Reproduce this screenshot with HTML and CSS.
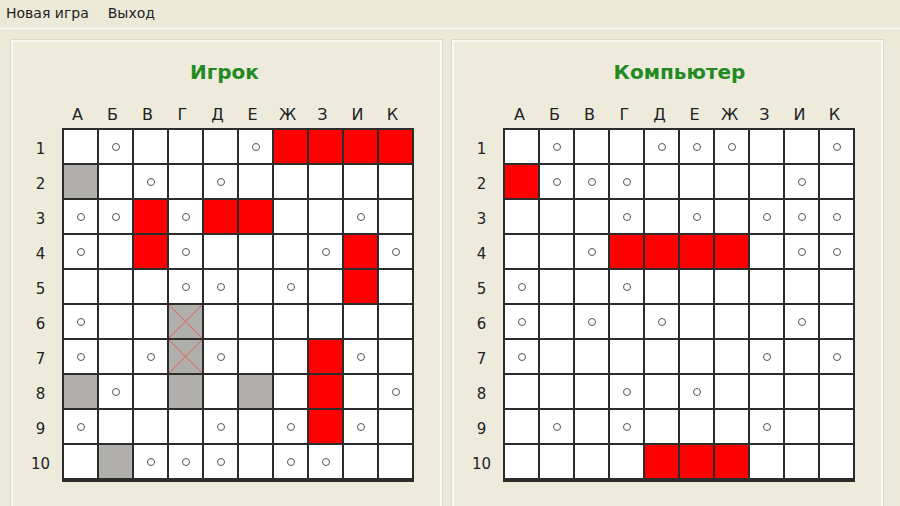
FILE: index.html
```html
<!DOCTYPE html>
<html lang="ru">
<head>
<meta charset="utf-8">
<title>Морской бой</title>
<link rel="stylesheet" href="styles.css">
</head>
<body>
<div class="menubar">
  <span class="menu-item">Новая игра</span>
  <span class="menu-item">Выход</span>
</div>
<div class="main">
  <section class="panel">
    <h2 class="title">Игрок</h2>
    <div class="col-labels">
      <span>А</span><span>Б</span><span>В</span><span>Г</span><span>Д</span><span>Е</span><span>Ж</span><span>З</span><span>И</span><span>К</span>
    </div>
    <div class="field">
      <div class="row-labels">
        <span>1</span><span>2</span><span>3</span><span>4</span><span>5</span><span>6</span><span>7</span><span>8</span><span>9</span><span>10</span>
      </div>
      <div class="cells">
        <div class="c"></div><div class="c d"></div><div class="c"></div><div class="c"></div><div class="c"></div><div class="c d"></div><div class="c r"></div><div class="c r"></div><div class="c r"></div><div class="c r"></div>
        <div class="c g"></div><div class="c"></div><div class="c d"></div><div class="c"></div><div class="c d"></div><div class="c"></div><div class="c"></div><div class="c"></div><div class="c"></div><div class="c"></div>
        <div class="c d"></div><div class="c d"></div><div class="c r"></div><div class="c d"></div><div class="c r"></div><div class="c r"></div><div class="c"></div><div class="c"></div><div class="c d"></div><div class="c"></div>
        <div class="c d"></div><div class="c"></div><div class="c r"></div><div class="c d"></div><div class="c"></div><div class="c"></div><div class="c"></div><div class="c d"></div><div class="c r"></div><div class="c d"></div>
        <div class="c"></div><div class="c"></div><div class="c"></div><div class="c d"></div><div class="c d"></div><div class="c"></div><div class="c d"></div><div class="c"></div><div class="c r"></div><div class="c"></div>
        <div class="c d"></div><div class="c"></div><div class="c"></div><div class="c x"></div><div class="c"></div><div class="c"></div><div class="c"></div><div class="c"></div><div class="c"></div><div class="c"></div>
        <div class="c d"></div><div class="c"></div><div class="c d"></div><div class="c x"></div><div class="c d"></div><div class="c"></div><div class="c"></div><div class="c r"></div><div class="c d"></div><div class="c"></div>
        <div class="c g"></div><div class="c d"></div><div class="c"></div><div class="c g"></div><div class="c"></div><div class="c g"></div><div class="c"></div><div class="c r"></div><div class="c"></div><div class="c d"></div>
        <div class="c d"></div><div class="c"></div><div class="c"></div><div class="c"></div><div class="c d"></div><div class="c"></div><div class="c d"></div><div class="c r"></div><div class="c d"></div><div class="c"></div>
        <div class="c"></div><div class="c g"></div><div class="c d"></div><div class="c d"></div><div class="c d"></div><div class="c"></div><div class="c d"></div><div class="c d"></div><div class="c"></div><div class="c"></div>
      </div>
    </div>
  </section>
  <section class="panel">
    <h2 class="title title-computer">Компьютер</h2>
    <div class="col-labels col-labels-computer">
      <span>А</span><span>Б</span><span>В</span><span>Г</span><span>Д</span><span>Е</span><span>Ж</span><span>З</span><span>И</span><span>К</span>
    </div>
    <div class="field">
      <div class="row-labels">
        <span>1</span><span>2</span><span>3</span><span>4</span><span>5</span><span>6</span><span>7</span><span>8</span><span>9</span><span>10</span>
      </div>
      <div class="cells">
        <div class="c"></div><div class="c d"></div><div class="c"></div><div class="c"></div><div class="c d"></div><div class="c d"></div><div class="c d"></div><div class="c"></div><div class="c"></div><div class="c d"></div>
        <div class="c r"></div><div class="c d"></div><div class="c d"></div><div class="c d"></div><div class="c"></div><div class="c"></div><div class="c"></div><div class="c"></div><div class="c d"></div><div class="c"></div>
        <div class="c"></div><div class="c"></div><div class="c"></div><div class="c d"></div><div class="c"></div><div class="c d"></div><div class="c"></div><div class="c d"></div><div class="c d"></div><div class="c d"></div>
        <div class="c"></div><div class="c"></div><div class="c d"></div><div class="c r"></div><div class="c r"></div><div class="c r"></div><div class="c r"></div><div class="c"></div><div class="c d"></div><div class="c d"></div>
        <div class="c d"></div><div class="c"></div><div class="c"></div><div class="c d"></div><div class="c"></div><div class="c"></div><div class="c"></div><div class="c"></div><div class="c"></div><div class="c"></div>
        <div class="c d"></div><div class="c"></div><div class="c d"></div><div class="c"></div><div class="c d"></div><div class="c"></div><div class="c"></div><div class="c"></div><div class="c d"></div><div class="c"></div>
        <div class="c d"></div><div class="c"></div><div class="c"></div><div class="c"></div><div class="c"></div><div class="c"></div><div class="c"></div><div class="c d"></div><div class="c"></div><div class="c d"></div>
        <div class="c"></div><div class="c"></div><div class="c"></div><div class="c d"></div><div class="c"></div><div class="c d"></div><div class="c"></div><div class="c"></div><div class="c"></div><div class="c"></div>
        <div class="c"></div><div class="c d"></div><div class="c"></div><div class="c d"></div><div class="c"></div><div class="c"></div><div class="c"></div><div class="c d"></div><div class="c"></div><div class="c"></div>
        <div class="c"></div><div class="c"></div><div class="c"></div><div class="c"></div><div class="c r"></div><div class="c r"></div><div class="c r"></div><div class="c"></div><div class="c"></div><div class="c"></div>
      </div>
    </div>
  </section>
</div>
</body>
</html>
```
FILE: styles.css
```css
* { box-sizing: border-box; }

html, body {
  margin: 0;
  padding: 0;
  width: 900px;
  height: 506px;
  overflow: hidden;
  background: #ece9d8;
  font-family: "DejaVu Sans", Verdana, sans-serif;
  color: #222;
}

.menubar {
  height: 29px;
  display: flex;
  align-items: center;
  gap: 19px;
  padding: 0 0 2px 6px;
  font-size: 14px;
  border-bottom: 1px solid #f8f7f0;
}

.main {
  display: flex;
  gap: 10px;
  padding: 11px 0 0 11px;
}

.panel {
  width: 431px;
  height: 480px;
  background: #eeebdd;
  border: 2px solid #f9f8f1;
  box-shadow: 0 0 0 1px #dcd9c9;
  padding: 18px 0 0 8px;
}

.title {
  margin: 0;
  height: 24px;
  line-height: 24px;
  font-size: 20px;
  font-weight: bold;
  color: #238a23;
  text-align: center;
  padding-right: 12px;
}

.title-computer {
  padding-right: 0;
  padding-left: 16px;
}

.col-labels {
  display: flex;
  margin: 21px 0 0 39px;
  height: 20px;
  line-height: 20px;
  font-size: 16px;
}

.col-labels-computer {
  margin-left: 40px;
}

.col-labels span {
  width: 35px;
  text-align: center;
}

.field {
  display: flex;
  margin-top: 3px;
}

.row-labels {
  width: 41px;
  display: flex;
  flex-direction: column;
  padding-top: 4px;
  font-size: 15px;
}

.row-labels span {
  height: 35px;
  line-height: 35px;
  text-align: center;
  padding-right: 2px;
}

.cells {
  display: grid;
  grid-template-columns: repeat(10, 33px);
  grid-auto-rows: 33px;
  gap: 2px;
  padding: 2px;
  background: #2c2c2c;
  width: 352px;
}

.c {
  background: #ffffff;
  display: flex;
  align-items: center;
  justify-content: center;
}

.d::after {
  content: "";
  width: 6px;
  height: 6px;
  border: 1.5px solid #555;
  border-radius: 50%;
  background: #fff;
}

.r { background: #ff0000; }

.g { background: #b1afac; }

.x {
  background:
    linear-gradient(to top right, transparent calc(50% - 0.8px), #d86a66 50%, transparent calc(50% + 0.8px)),
    linear-gradient(to bottom right, transparent calc(50% - 0.8px), #d86a66 50%, transparent calc(50% + 0.8px)),
    #b1afac;
}
```
